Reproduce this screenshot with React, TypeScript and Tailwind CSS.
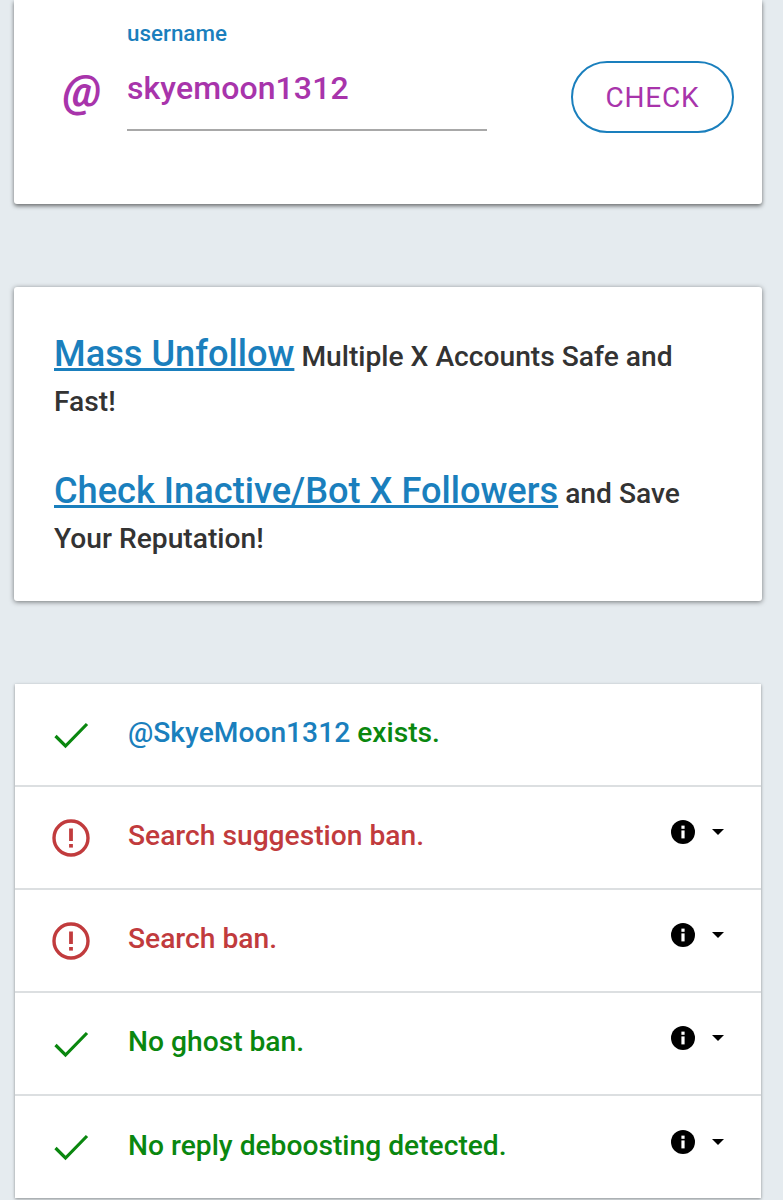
import React from "react";

const purple = "text-[#a834ab]";

function CheckIcon() {
  return (
    <svg width="38" height="38" viewBox="0 0 38 38" fill="none" className="shrink-0">
      <path d="M3.5 20 L13.5 30 L35 8" stroke="#0a870f" strokeWidth="3.2" />
    </svg>
  );
}

function AlertIcon() {
  return (
    <svg width="38" height="38" viewBox="0 0 38 38" fill="none" className="shrink-0">
      <circle cx="19" cy="19" r="17" stroke="#c13b3d" strokeWidth="3.4" />
      <path d="M19 9.5 V22" stroke="#c13b3d" strokeWidth="3.8" />
      <path d="M19 25 V28.6" stroke="#c13b3d" strokeWidth="3.8" />
    </svg>
  );
}

function InfoDropdown() {
  return (
    <div className="flex items-center gap-[17px] ml-auto mr-[37px] mb-[11px]">
      <svg width="24" height="24" viewBox="0 0 24 24">
        <circle cx="12" cy="12" r="12" fill="#000" />
        <rect x="10.4" y="10.4" width="3.2" height="8" fill="#fff" />
        <rect x="10.4" y="5.6" width="3.2" height="3.2" fill="#fff" />
      </svg>
      <svg width="12" height="6" viewBox="0 0 12 6">
        <path d="M0 0 H12 L6 6 Z" fill="#000" />
      </svg>
    </div>
  );
}

const rows = [
  { id: "exists", ok: true, info: false, text: "exists.", handle: "@SkyeMoon1312" },
  { id: "suggestion", ok: false, info: true, text: "Search suggestion ban." },
  { id: "search", ok: false, info: true, text: "Search ban." },
  { id: "ghost", ok: true, info: true, text: "No ghost ban." },
  { id: "reply", ok: true, info: true, text: "No reply deboosting detected." },
];

export default function App() {
  return (
    <div className="w-[783px] h-[1200px] overflow-hidden bg-[#e5ebef] font-['Roboto',sans-serif]">
      {/* Username form */}
      <div className="ml-[14px] mr-[21px] h-[204px] bg-white rounded-b-[3px] shadow-[0_2px_4px_rgba(0,0,0,0.55)] flex items-start pl-[49px] pr-[28px] pt-[21px]">
        <div className={`mt-[43px] w-[64px] text-[44px] leading-[54px] font-bold italic ${purple}`}>
          @
        </div>
        <div className="w-[360px]">
          <div className="text-[22.4px] leading-[25px] font-medium text-[#1a7fbd]">username</div>
          <div className={`mt-[21px] h-[64px] text-[32px] leading-[42px] font-medium ${purple} border-b-2 border-[#a8a8a8] tracking-[0.1px]`}>
            skyemoon1312
          </div>
        </div>
        <button className={`ml-auto mt-[40px] w-[163px] h-[72px] pt-[2px] rounded-[36px] border-2 border-[#1a7fbd] text-[28px] tracking-[0.8px] ${purple}`}>
          CHECK
        </button>
      </div>

      {/* Promo links */}
      <div className="ml-[14px] mr-[21px] mt-[83px] h-[314px] bg-white rounded-[3px] shadow-[0_1px_5px_rgba(0,0,0,0.5)] pl-[40px] pr-[40px] pt-[44px] text-[28.2px] leading-[45px] font-medium text-[#333333]">
        <p>
          <a href="#" className="text-[36.2px] underline text-[#1a7fbd]">Mass Unfollow</a> Multiple X Accounts Safe and Fast!
        </p>
        <p className="mt-[44px]">
          <a href="#" className="text-[36.2px] underline text-[#1a7fbd]">Check Inactive/Bot X Followers</a> and Save Your Reputation!
        </p>
      </div>

      {/* Results */}
      <div className="ml-[15px] mr-[22px] mt-[83px] bg-white shadow-[0_1px_3px_rgba(0,0,0,0.4)] divide-y-2 divide-[#dcdfe1]">
        {rows.map((row) => (
          <div key={row.id} className="h-[103px] last:h-[102px] flex items-center pl-[37px]">
            {row.ok ? <CheckIcon /> : <AlertIcon />}
            <div className={`ml-[38px] text-[28.2px] leading-[36px] font-medium mb-[3px] ${row.ok ? "text-[#0a870f]" : "text-[#c13b3d]"}`}>
              {row.handle && <span className="text-[#1a7fbd]">{row.handle} </span>}
              {row.text}
            </div>
            {row.info && <InfoDropdown />}
          </div>
        ))}
      </div>
    </div>
  );
}
